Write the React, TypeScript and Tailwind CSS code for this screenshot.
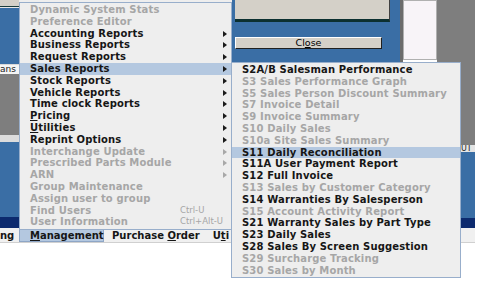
import React from 'react';

type Item = {
  label: React.ReactNode;
  disabled?: boolean;
  arrow?: boolean;
  active?: boolean;
  shortcut?: string;
};

const u = (ch: string) => <span className="underline underline-offset-[1px]">{ch}</span>;

const mainItems: Item[] = [
  { label: 'Dynamic System Stats', disabled: true },
  { label: 'Preference Editor', disabled: true },
  { label: 'Accounting Reports', arrow: true },
  { label: 'Business Reports', arrow: true },
  { label: 'Request Reports', arrow: true },
  { label: 'Sales Reports', arrow: true, active: true },
  { label: 'Stock Reports', arrow: true },
  { label: 'Vehicle Reports', arrow: true },
  { label: 'Time clock Reports', arrow: true },
  { label: <>{u('P')}ricing</>, arrow: true },
  { label: <>{u('U')}tilities</>, arrow: true },
  { label: 'Reprint Options', arrow: true },
  { label: 'Interchange Update', arrow: true, disabled: true },
  { label: 'Prescribed Parts Module', arrow: true, disabled: true },
  { label: 'ARN', arrow: true, disabled: true },
  { label: 'Group Maintenance', disabled: true },
  { label: 'Assign user to group', disabled: true },
  { label: 'Find Users', disabled: true, shortcut: 'Ctrl-U' },
  { label: 'User Information', disabled: true, shortcut: 'Ctrl+Alt-U' },
];

const salesItems: Item[] = [
  { label: 'S2A/B Salesman Performance' },
  { label: 'S3 Sales Performance Graph', disabled: true },
  { label: 'S5 Sales Person Discount Summary', disabled: true },
  { label: 'S7 Invoice Detail', disabled: true },
  { label: 'S9 Invoice Summary', disabled: true },
  { label: 'S10 Daily Sales', disabled: true },
  { label: 'S10a Site Sales Summary', disabled: true },
  { label: 'S11 Daily Reconciliation', active: true },
  { label: 'S11A User Payment Report' },
  { label: 'S12 Full Invoice' },
  { label: 'S13 Sales by Customer Category', disabled: true },
  { label: 'S14 Warranties By Salesperson' },
  { label: 'S15 Account Activity Report', disabled: true },
  { label: 'S21 Warranty Sales by Part Type' },
  { label: 'S23 Daily Sales' },
  { label: 'S28 Sales By Screen Suggestion' },
  { label: 'S29 Surcharge Tracking', disabled: true },
  { label: 'S30 Sales by Month', disabled: true },
];

const Arrow: React.FC<{ disabled?: boolean }> = ({ disabled }) => (
  <svg width="4" height="6" viewBox="0 0 4 6" className="absolute right-[4px] top-[3px]">
    <polygon points="0,0 4,3 0,6" fill={disabled ? '#a8a8a8' : '#1a1a1a'} />
  </svg>
);

const MenuRow: React.FC<{ item: Item }> = ({ item }) => (
  <div
    className={`relative h-[11.8px] pl-[10px] leading-[11.8px] whitespace-nowrap font-bold text-[10px] tracking-[0.15px] ${
      item.active ? 'bg-[#b4c8e0]' : ''
    } ${item.disabled ? 'text-[#a6a6a6]' : 'text-[#161616]'}`}
  >
    {item.label}
    {item.shortcut && (
      <span className="absolute left-[160px] top-0 font-normal tracking-normal text-[8.5px] text-[#a6a6a6]">
        {item.shortcut}
      </span>
    )}
    {item.arrow && <Arrow disabled={item.disabled} />}
  </div>
);

export default function App() {
  return (
    <div className="relative w-[483px] h-[284px] overflow-hidden bg-white font-['DejaVu_Sans',sans-serif]">
      <div className="w-[475px] flex flex-col">
        <div className="h-[228px] flex">
          {/* left strip of the window behind */}
          <div className="w-[19px] flex flex-col">
            <div className="h-[6px] bg-[#d4d0c8]" />
            <div className="h-[1px] bg-[#1c3c3c]" />
            <div className="h-[1px] bg-[#e8e8e8]" />
            <div className="h-[56px] bg-[#3a6ea5]" />
            <div className="h-[1px] bg-[#d8d8d8]" />
            <div className="h-[9px] bg-[#f4f4f4] text-[9px] leading-[9px] text-[#202020]">ans</div>
            <div className="h-[61px] bg-[#7e7e7e]" />
            <div className="h-[7px] bg-[#dcdcdc]" />
            <div className="h-[75px] bg-[#3a6ea5]" />
            <div className="h-[11px] bg-[#0c2a6e]" />
          </div>
          <div className="w-[213px] bg-[#eeeeee]" />
          {/* right side: dialog behind the menus */}
          <div className="flex-1 flex flex-col">
            <div className="h-[62px] flex">
              <div className="w-[168px] bg-[#3a6ea5] pl-[3px] flex flex-col">
                <div className="w-[155px] h-[22px] bg-[#d4d0c8] border-r border-b-[3px] border-r-[#404040] border-b-[#0c3030]" />
                <div className="mt-[15px] w-[147px] h-[12px] bg-[#d4d0c8] border border-t-white border-l-white border-r-[#202020] border-b-[#202020] flex items-center justify-center text-[9.5px] leading-none text-black">
                  Cl{u('o')}se
                </div>
              </div>
              <div className="w-[3px] bg-[#6c6c6c]" />
              <div className="w-[34px] h-[60px] bg-[#f8f4f8] border border-[#b0b0b0]" />
              <div className="flex-1 bg-[#7e7e7e]" />
            </div>
            <div className="h-[83px] bg-[#7e7e7e]" />
            <div className="h-[7px] bg-[#e4e4e4] pl-[229px] text-[8px] leading-[7px] text-[#202020] overflow-hidden">UT</div>
            <div className="h-[66px] bg-[#3a6ea5]" />
            <div className="h-[10px] bg-[#0c2a6e]" />
          </div>
        </div>
        {/* menu bar */}
        <div className="h-[15px] flex items-stretch bg-[#f0f0f0] border-b border-[#d0d0d0] text-[10px] font-bold text-[#161616] whitespace-nowrap">
          <div className="w-[19px] leading-[15px]">ng</div>
          <div className="w-[85px] bg-[#b4c8e0] border border-[#8ea6c6] pl-[10px] leading-[13px]">
            {u('M')}anagement
          </div>
          <div className="ml-[8px] leading-[15px]">
            Purchase {u('O')}rder
          </div>
          <div className="ml-[13px] w-[16px] overflow-hidden leading-[15px]">
            U{u('t')}il
          </div>
        </div>
      </div>

      {/* Management dropdown */}
      <div className="absolute left-[19px] top-[2px] w-[213px] bg-[#eeeeee] border border-[#98aecb] py-[1px]">
        {mainItems.map((item, i) => (
          <MenuRow key={i} item={item} />
        ))}
      </div>

      {/* Sales Reports submenu */}
      <div className="absolute left-[231px] top-[62px] w-[230px] bg-[#eeeeee] border border-[#98aecb] py-[1px]">
        {salesItems.map((item, i) => (
          <MenuRow key={i} item={item} />
        ))}
      </div>
    </div>
  );
}
